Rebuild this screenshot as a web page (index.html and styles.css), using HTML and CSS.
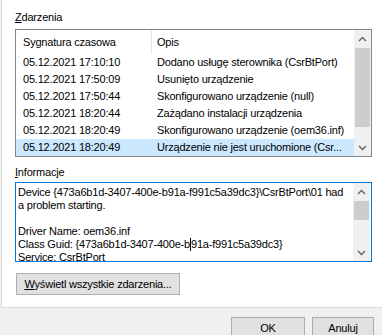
FILE: index.html
```html
<!DOCTYPE html>
<html lang="pl">
<head>
<meta charset="utf-8">
<link rel="stylesheet" href="styles.css">
</head>
<body>
<div class="page">
  <div class="label lbl-events"><u>Z</u>darzenia</div>
  <div class="listbox">
    <div class="list-main">
      <div class="row header"><div class="c1">Sygnatura czasowa</div><div class="sep"></div><div class="c2">Opis</div></div>
      <div class="row"><div class="c1">05.12.2021 17:10:10</div><div class="c2">Dodano usługę sterownika (CsrBtPort)</div></div>
      <div class="row"><div class="c1">05.12.2021 17:50:09</div><div class="c2">Usunięto urządzenie</div></div>
      <div class="row"><div class="c1">05.12.2021 17:50:44</div><div class="c2">Skonfigurowano urządzenie (null)</div></div>
      <div class="row"><div class="c1">05.12.2021 18:20:44</div><div class="c2">Zażądano instalacji urządzenia</div></div>
      <div class="row"><div class="c1">05.12.2021 18:20:49</div><div class="c2">Skonfigurowano urządzenie (oem36.inf)</div></div>
      <div class="row selected"><div class="c1">05.12.2021 18:20:49</div><div class="c2">Urządzenie nie jest uruchomione (Csr...</div></div>
    </div>
    <div class="vscroll list-scroll">
      <div class="arrow"><svg width="9" height="6" viewBox="0 0 9 6"><path d="M1 5 L4.5 1.5 L8 5" fill="none" stroke="#606060" stroke-width="1.3"/></svg></div>
      <div class="track"><div class="thumb"></div></div>
      <div class="arrow"><svg width="9" height="6" viewBox="0 0 9 6"><path d="M1 1 L4.5 4.5 L8 1" fill="none" stroke="#606060" stroke-width="1.3"/></svg></div>
    </div>
  </div>
  <div class="label lbl-info"><u>I</u>nformacje</div>
  <div class="textbox">
    <div class="text">Device {473a6b1d-3407-400e-b91a-f991c5a39dc3}\CsrBtPort\01 had<br>a problem starting.<br><br>Driver Name: oem36.inf<br>Class Guid: {473a6b1d-3407-400e-b<span class="caret"></span>91a-f991c5a39dc3}<br>Service: CsrBtPort</div>
    <div class="vscroll text-scroll">
      <div class="arrow"><svg width="9" height="6" viewBox="0 0 9 6"><path d="M1 5 L4.5 1.5 L8 5" fill="none" stroke="#606060" stroke-width="1.3"/></svg></div>
      <div class="track"><div class="thumb"></div></div>
      <div class="arrow"><svg width="9" height="6" viewBox="0 0 9 6"><path d="M1 1 L4.5 4.5 L8 1" fill="none" stroke="#606060" stroke-width="1.3"/></svg></div>
    </div>
  </div>
  <div class="btn btn-all"><u>W</u>yświetl wszystkie zdarzenia...</div>
</div>
<div class="footer">
  <div class="btn btn-ok">OK</div>
  <div class="btn btn-cancel">Anuluj</div>
</div>
</body>
</html>
```

FILE: styles.css
```css
html, body {
  margin: 0;
  padding: 0;
}
body {
  width: 382px;
  height: 335px;
  overflow: hidden;
  background: #f0f0f0;
  font-family: "Liberation Sans", Arial, sans-serif;
  font-size: 11px;
  letter-spacing: -0.2px;
  color: #000;
}
u { text-decoration: underline; text-underline-offset: 1px; }
.page {
  margin-left: 1px;
  height: 308px;
  box-sizing: border-box;
  background: #fff;
  border-left: 1px solid #d9d9d9;
  border-bottom: 1px solid #d9d9d9;
  padding: 11px 0 0 13px;
  display: flex;
  flex-direction: column;
  align-items: flex-start;
}
.label {
  line-height: 13px;
  height: 13px;
}
.listbox {
  margin-top: 5px;
  width: 357px;
  height: 128px;
  box-sizing: border-box;
  border: 1px solid #828790;
  display: flex;
}
.list-main {
  flex: 1;
  display: flex;
  flex-direction: column;
  overflow: hidden;
}
.row {
  display: flex;
  height: 17px;
  line-height: 17px;
  white-space: nowrap;
  flex: none;
}
.row.header {
  height: 24px;
  line-height: 24px;
}
.c1 {
  width: 135px;
  padding-left: 7px;
  box-sizing: border-box;
  flex: none;
}
.sep {
  width: 1px;
  background: #e5e5e5;
  flex: none;
}
.c2 {
  padding-left: 6px;
  flex: 1;
}
.header .c2 { padding-left: 5px; }
.row.selected { background: #cce8ff; }
.vscroll {
  width: 17px;
  flex: none;
  background: #f0f0f0;
  display: flex;
  flex-direction: column;
}
.arrow {
  height: 17px;
  flex: none;
  display: flex;
  align-items: center;
  justify-content: center;
}
.track {
  flex: 1;
  display: flex;
  flex-direction: column;
}
.thumb {
  margin: 1px 1px 0 1px;
  background: #cdcdcd;
}
.list-scroll .thumb { height: 79px; }
.text-scroll .thumb { height: 19px; }
.lbl-info { margin-top: 9px; }
.textbox {
  margin-top: 3px;
  width: 357px;
  height: 80px;
  box-sizing: border-box;
  border: 1px solid #0078d7;
  display: flex;
}
.text {
  flex: 1;
  overflow: hidden;
  padding: 3px 0 0 2px;
  line-height: 13px;
  white-space: nowrap;
}
.caret {
  display: inline-block;
  width: 1px;
  height: 13px;
  background: #000;
  vertical-align: top;
}
.text-scroll { margin-right: 1px; }
.btn {
  box-sizing: border-box;
  background: #e1e1e1;
  border: 1px solid #adadad;
  display: flex;
  align-items: center;
  justify-content: center;
  line-height: 13px;
}
.btn-all {
  margin-top: 11px;
  margin-left: 1px;
  width: 164px;
  height: 22px;
}
.footer {
  display: flex;
  padding: 9px 0 0 231px;
  gap: 7px;
}
.btn-ok {
  width: 74px;
  height: 23px;
}
.btn-cancel {
  width: 62px;
  height: 23px;
}
```
